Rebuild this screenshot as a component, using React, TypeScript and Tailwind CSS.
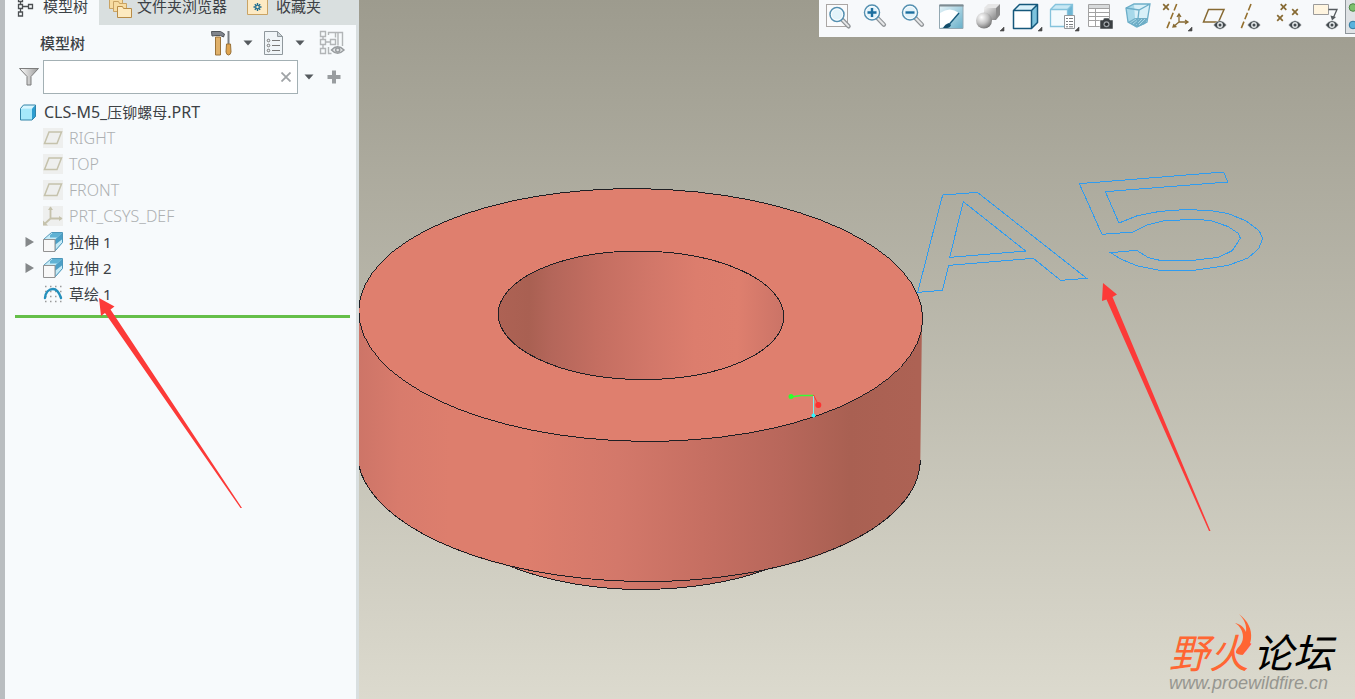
import React from "react";

type IconProps = { children: React.ReactNode; label: string; menu?: boolean };

function ToolButton({ children, label, menu }: IconProps) {
  return (
    <button type="button" aria-label={label} title={label} className="flex min-w-0 flex-1 justify-center">
      <svg width="36" height="36" viewBox="0 0 36 36" fill="none" className="shrink-0 overflow-visible">
        {children}
        {menu && <path d="M34 27v4h-4z" fill="#4a4a4a" stroke="#4a4a4a" strokeWidth=".6" />}
      </svg>
    </button>
  );
}

function Eye({ x, y = 25 }: { x: number; y?: number }) {
  return (
    <g>
      <path
        d={`M${x - 6.5} ${y}q6.5 -8.5 13 0q-6.5 8.5 -13 0z`}
        fill="#434a4e"
        stroke="#f7f9fb"
        strokeWidth=".5"
      />
      <circle cx={x} cy={y} r="2.9" fill="#e4e8ea" />
      <circle cx={x} cy={y} r="1.5" fill="#434a4e" />
    </g>
  );
}

function Cross({ x, y }: { x: number; y: number }) {
  return (
    <path
      d={`M${x - 2.8} ${y - 2.8}l5.6 5.6m0 -5.6l-5.6 5.6`}
      stroke="#876a33"
      strokeWidth="1.7"
    />
  );
}

function Lens({ cx, cy, r }: { cx: number; cy: number; r: number }) {
  return (
    <g>
      <path d={`M${cx + r * 0.72} ${cy + r * 0.72}l6.5 6.8`} stroke="#8f9396" strokeWidth="4.4" strokeLinecap="round" />
      <path d={`M${cx + r * 0.8} ${cy + r * 0.8}l5.8 6`} stroke="#e6e7e8" strokeWidth="2" strokeLinecap="round" />
      <circle cx={cx} cy={cy} r={r} fill="#e3f3fa" stroke="#5590b0" strokeWidth="1.5" />
      <circle cx={cx} cy={cy} r={r - 1.4} stroke="#fff" strokeWidth=".8" />
    </g>
  );
}

function ViewToolbar() {
  return (
    <div
      role="toolbar"
      aria-label="视图"
      className="relative z-10 flex h-[37px] w-[536px] self-end bg-[#f7f9fb]"
    >
      <ToolButton label="重新调整">
        <rect x="6.5" y="4.5" width="21" height="22" fill="#fafbfc" stroke="#aaa6a4" />
        <Lens cx={17} cy={14.5} r={7} />
      </ToolButton>
      <ToolButton label="放大">
        <Lens cx={15} cy={12.5} r={7.5} />
        <path d="M10.5 12.5h9M15 8v9" stroke="#1d6f9f" strokeWidth="2.4" />
      </ToolButton>
      <ToolButton label="缩小">
        <Lens cx={15} cy={12.5} r={7.5} />
        <path d="M10.5 12.5h9" stroke="#1d6f9f" strokeWidth="2.4" />
      </ToolButton>
      <ToolButton label="重画">
        <defs>
          <linearGradient id="repaint" x1="0" y1="0" x2="1" y2="1">
            <stop offset="0" stopColor="#e9f5f9" />
            <stop offset="1" stopColor="#66afc9" />
          </linearGradient>
        </defs>
        <rect x="6.5" y="5" width="23.5" height="23.5" fill="url(#repaint)" />
        <path d="M7 13Q17 6 26 13L15 26L7 28z" fill="#fff" />
        <path d="M6.5 28.5V5h23.5v23.5z" stroke="#93a8b2" />
        <path d="M6.5 5.5h24" stroke="#7e8b91" strokeWidth="2" />
        <path d="M26 13L16.5 24" stroke="#17597a" strokeWidth="1.4" />
        <path d="M10 28q2 -4 6 -5l2 2q-1 3 -4 3z" fill="#134d6a" />
      </ToolButton>
      <ToolButton label="渲染选项" menu>
        <defs>
          <radialGradient id="ball" cx=".35" cy=".3" r=".8">
            <stop offset="0" stopColor="#fff" />
            <stop offset=".5" stopColor="#c3c3c3" />
            <stop offset="1" stopColor="#666" />
          </radialGradient>
          <linearGradient id="block" x1="0" y1="0" x2="1" y2="1">
            <stop offset="0" stopColor="#f1f1f1" />
            <stop offset="1" stopColor="#858585" />
          </linearGradient>
        </defs>
        <path d="M14 8l4-4h12l-4 4z" fill="#e6e6e6" />
        <path d="M14 8h12v12H14z" fill="url(#block)" />
        <path d="M26 8l4-4v11l-4 5z" fill="#8b8b8b" />
        <circle cx="14" cy="20.5" r="8" fill="url(#ball)" />
      </ToolButton>
      <ToolButton label="显示样式" menu>
        <path d="M5.5 10.5l6-6h18l-6 6z" fill="#d9f1fa" />
        <path d="M23.5 10.5l6-6v18l-6 6z" fill="#7cc3dd" />
        <path d="M5.5 10.5h18v18h-18z" fill="#fff" />
        <path
          d="M5.5 10.5l6-6h18v18l-6 6h-18zM5.5 10.5h18v18M23.5 10.5l6-6"
          stroke="#15587b"
          strokeWidth="1.5"
          strokeLinejoin="round"
        />
      </ToolButton>
      <ToolButton label="已保存方向" menu>
        <path d="M5.5 9.5l5-5h17l-5 5z" fill="#c8e8f4" />
        <path d="M22.5 9.5l5-5v16l-5 6z" fill="#6db5d3" />
        <path d="M5.5 9.5h17v17h-17z" fill="#f3fafd" />
        <path d="M5.5 9.5l5-5h17v17l-5 5h-17zM5.5 9.5h17v17M22.5 9.5l5-5" stroke="#85c3dc" strokeWidth="1.3" />
        <path d="M19.5 15.5h10v13h-10z" fill="#fff" stroke="#929699" />
        <path d="M21 18.5h2m1 0h4M21 21.5h2m1 0h4M21 24.5h2m1 0h4M21 26.8h2m1 0h4" stroke="#7a7e81" />
      </ToolButton>
      <ToolButton label="视图管理器">
        <path d="M5.5 4.5h21v22h-21z" fill="#fff" stroke="#a2a2a2" />
        <path d="M6 5h20v3H6z" fill="#d8dadb" />
        <path d="M5.5 8.5h21M5.5 12.5h21M5.5 16.5h21M5.5 20.5h21M12.5 8.5v18" stroke="#a2a2a2" />
        <path d="M17 20h3l1-2h5l1 2h3v9H17z" fill="#3b4043" stroke="#f7f9fb" strokeWidth=".5" />
        <circle cx="23.5" cy="24.3" r="3" fill="#9da3a7" />
        <circle cx="23.5" cy="24.3" r="1.7" fill="#292d30" />
      </ToolButton>
      <ToolButton label="透视图">
        <path d="M6 8l8-4h16l-4 19l-10 4.5L8 22z" fill="#a7d9ea" />
        <path d="M14 4h16l-2 14H15z" fill="#d8f0f8" />
        <path d="M8 22l7-4h13l-3 6-8 3z" fill="#70aec6" />
        <path d="M10 23l6-4m-3 5l6-5m-3 6l6-6m-3 6l6-6" stroke="#aad9e8" />
        <path d="M6 8l8-4h16l-3 18-10 5-9-5zM6 8l13 2 11-6M19 10l-2 17" stroke="#6caec8" strokeWidth="1.3" />
      </ToolButton>
      <ToolButton label="基准显示过滤器" menu>
        <Cross x={8} y={7} />
        <path d="M18.7 4L8.7 29" stroke="#94702f" strokeWidth="1.6" strokeDasharray="7 2.5" />
        <path d="M21 22v-8m-2 3l2-3 2 3M21 22h9m-3-2l3 2-3 2M21 22l-6 5m1-3l-1 3 3.5-.5" stroke="#876a33" strokeWidth="1.3" />
      </ToolButton>
      <ToolButton label="平面显示">
        <path d="M12.5 9.5H28L22.5 22h-15z" stroke="#876a33" strokeWidth="1.5" />
        <Eye x={24} />
      </ToolButton>
      <ToolButton label="轴显示">
        <path d="M18 4L8 29" stroke="#94702f" strokeWidth="1.6" strokeDasharray="7 2.5" />
        <Eye x={21} />
      </ToolButton>
      <ToolButton label="点显示">
        <Cross x={12.5} y={7} />
        <Cross x={24} y={12} />
        <Cross x={9} y={18} />
        <Eye x={24} />
      </ToolButton>
      <ToolButton label="注释显示">
        <path d="M5.5 4.5h15v10h-15z" fill="#fff5e0" stroke="#9b9b9b" />
        <path d="M20.5 9.5h8.5l-4 9" stroke="#555b5f" strokeWidth="1.3" />
        <path d="M22.5 15.5l1.5 5 4-3.5z" fill="#555b5f" />
        <Eye x={24} y={25} />
      </ToolButton>
      <button
        type="button"
        aria-label="旋转中心"
        className="h-[34px] w-[10px] shrink-0 overflow-hidden border-b border-l border-[#8f969b] bg-[#dfe2e5]"
      >
        <svg width="9" height="33" viewBox="0 0 9 33">
          <circle cx="7" cy="7.5" r="3.8" fill="#7cbf6c" stroke="#4d8646" />
          <circle cx="7" cy="25" r="3.8" fill="#58b2dc" stroke="#3179a0" />
        </svg>
      </button>
    </div>
  );
}

function Caret({ label }: { label: string }) {
  return (
    <button type="button" aria-label={label} className="flex h-6 w-[10px] items-center justify-center">
      <svg width="10" height="6" viewBox="0 0 10 6">
        <path d="M.5 .5h9L5 5.5z" fill="#555a5e" />
      </svg>
    </button>
  );
}

function PlaneIcon() {
  return (
    <svg width="20" height="20" viewBox="0 0 20 20" fill="none">
      <path d="M0 0h20v20H0z" fill="#eeefee" />
      <path d="M6 4h12.5l-4.500 11.5H1.500z" stroke="#c5c2ac" strokeWidth="1.5" />
    </svg>
  );
}

function CsysIcon() {
  return (
    <svg width="20" height="20" viewBox="0 0 20 20" fill="none">
      <path d="M0 0h20v20H0z" fill="#eeefee" />
      <path d="M7.500 12.500V1.500M7.500 12.500H18.500M7.500 12.500L1.500 18" stroke="#c5c2ac" strokeWidth="1.8" />
      <path d="M5 4l2.500-3.500L10 4zM16 10l3.500 2.500L16 15zM0 14.500v5h5z" fill="#c5c2ac" />
    </svg>
  );
}

function ExtrudeIcon() {
  return (
    <svg width="20" height="20" viewBox="0 0 20 20" fill="none">
      <path d="M1 7.500L9 1H19.500L12 7.500z" fill="#c5ecf8" />
      <path d="M7 3L9.500 1H19L14 5.500H7z" fill="#5fb2d4" />
      <path d="M12 7.500l7.500-7v10L12 19z" fill="#4b9fc6" />
      <path d="M12.500 18V12.500L19.500 7v4z" fill="#c5eaf6" />
      <path d="M.5 7.500L8.500 .5h11v10L12 19" stroke="#4c97ba" />
      <path d="M.5 7.500h11.500v12H.5z" fill="#f8f8f8" stroke="#929292" />
    </svg>
  );
}

function SketchIcon() {
  return (
    <svg width="20" height="20" viewBox="0 0 20 20" fill="none">
      <path
        d="M2 2.500h17M2 7.500h17M2 12.500h17M2 17.500h17"
        stroke="#9a9a9a"
        strokeWidth="1.5"
        strokeDasharray="1.5 3.5"
      />
      <path d="M2 14C2.500 8 6 5 10 5S16 8 18 14" stroke="#2490bd" strokeWidth="2.4" strokeLinecap="round" />
    </svg>
  );
}

type Node = { name: string; icon: React.ReactNode; dim?: boolean; expandable?: boolean };

const nodes: Node[] = [
  { name: "RIGHT", icon: <PlaneIcon />, dim: true },
  { name: "TOP", icon: <PlaneIcon />, dim: true },
  { name: "FRONT", icon: <PlaneIcon />, dim: true },
  { name: "PRT_CSYS_DEF", icon: <CsysIcon />, dim: true },
  { name: "拉伸 1", icon: <ExtrudeIcon />, expandable: true },
  { name: "拉伸 2", icon: <ExtrudeIcon />, expandable: true },
  { name: "草绘 1", icon: <SketchIcon /> },
];

function Sidebar() {
  return (
    <aside className="w-[359px] shrink-0 border-r-[3px] border-l-[5px] border-r-[#d9dfe0] border-l-[#b9bdc0] bg-[#f7fafc]">
      <div role="tablist" className="flex h-[25px] items-end overflow-hidden bg-[#d9dfdf]">
        <button
          type="button"
          role="tab"
          aria-selected="true"
          className="flex h-[38px] w-[94px] items-center gap-2 bg-[#f7fafc] pl-3"
        >
          <svg width="18" height="22" viewBox="0 0 18 22" fill="none" className="shrink-0">
            <path d="M1.500 2.500h4v4h-4zM1.500 9.500h4v4h-4zM11.500 9.500h4v4h-4zM1.500 17h4v4h-4zM3.500 6.500v3M3.500 13.500V17M5.500 11.500h6" stroke="#4b4f52" strokeWidth="1.3" />
          </svg>
          模型树
        </button>
        <button type="button" role="tab" aria-selected="false" className="flex h-[38px] items-center gap-1 pl-2.5">
          <svg width="24" height="24" viewBox="0 0 24 24" fill="none" className="shrink-0">
            <g fill="#f7dca2" stroke="#c9a364">
              <path d="M.5 3.500h5l1 2h7v9H.5z" />
              <path d="M4.500 7.500h5l1 2h7v8h-13z" />
              <path d="M8.500 12.500h5l1 2h8v9h-14z" fill="#fdeac0" stroke="#b88c47" />
            </g>
          </svg>
          文件夹浏览器
        </button>
        <button type="button" role="tab" aria-selected="false" className="flex h-[38px] items-center gap-2 pl-5">
          <svg width="21" height="18" viewBox="0 0 21 18" fill="none" className="shrink-0">
            <path d="M.5 2.500h6l1-2h7l1 2h5v15H.5z" fill="#fdeac4" stroke="#c9a364" />
            <path d="M10.500 6v8M6.500 10h8M7.800 7.300l5.400 5.400M13.200 7.300l-5.400 5.400" stroke="#1c6b8f" strokeWidth="1.4" />
            <circle cx="10.500" cy="10" r="1.200" fill="#fdeac4" />
          </svg>
          收藏夹
        </button>
      </div>

      <div className="flex h-[35px] items-center pr-[11px] pl-[35px]">
        <h1 className="flex-1 text-[15px] font-medium">模型树</h1>
        <button type="button" aria-label="设置" className="mr-2.5">
          <svg width="22" height="26" viewBox="0 0 22 26" fill="none">
            <path d="M4.500 7h5v18h-5z" fill="#dfb06a" stroke="#9a7238" />
            <path d="M.5 1.500h9l4 2.500-1 3-3-1.500H5L1 6z" fill="#80858d" stroke="#50555b" />
            <path d="M17.500 1v13" stroke="#797e83" strokeWidth="2" />
            <path d="M15.500 14h4l.5 8q-.5 3-2.500 3t-2.500-3z" fill="#dfa44f" stroke="#9a7238" />
          </svg>
        </button>
        <Caret label="设置选项" />
        <button type="button" aria-label="显示" className="mx-[11px]">
          <svg width="20" height="26" viewBox="0 0 20 26" fill="none">
            <path d="M.5 1.500h13l5 5v18h-18z" fill="#f0f5f8" stroke="#90989d" />
            <path d="M13.500 1.500v5h5z" fill="#cbd3d7" stroke="#90989d" />
            <path d="M8 10.500h8M8 15.500h8M8 20.500h8" stroke="#777" />
            <g stroke="#777">
              <circle cx="4.500" cy="10.500" r="1.300" />
              <circle cx="4.500" cy="15.500" r="1.300" />
              <circle cx="4.500" cy="20.500" r="1.300" />
            </g>
          </svg>
        </button>
        <Caret label="显示选项" />
        <button type="button" aria-label="树列" className="ml-3.5">
          <svg width="26" height="25" viewBox="0 0 26 25" fill="none">
            <path d="M1.500 1.500h5v5h-5zM1.500 9.500h5v5h-5zM1.500 18.500h5v5h-5zM11.500 9.500h5v5h-5zM4 6.500v3M4 14.500v4M6.500 12h5M9.500 5V2.500h7v5M16.500 2.500h7V16M9.500 17v6.500h3M19 2.500v13" stroke="#b2b5b7" strokeWidth="1.4" />
            <path d="M12.500 20q6-6.500 12.500 0q-6.500 6.500-12.500 0z" fill="#e4e6e7" stroke="#989c9f" strokeWidth="1.5" />
            <circle cx="18.700" cy="20" r="2" stroke="#989c9f" strokeWidth="1.5" />
          </svg>
        </button>
      </div>

      <div className="flex h-[34px] items-center pr-[15px] pl-[13px]">
        <svg width="22" height="20" viewBox="0 0 22 20" fill="none" className="mr-[3px] shrink-0">
          <defs>
            <linearGradient id="funnel">
              <stop offset="0" stopColor="#fff" />
              <stop offset="1" stopColor="#999" />
            </linearGradient>
          </defs>
          <path d="M1.500 1.500h19L13 9.500V18H9V9.500z" fill="url(#funnel)" stroke="#7d7d7d" />
        </svg>
        <div className="flex h-[34px] min-w-0 flex-1 items-center border border-[#a3b0b4] bg-white">
          <input type="text" aria-label="过滤模型树" className="h-8 min-w-0 flex-1 px-2 outline-none" />
          <button type="button" aria-label="清除" className="mr-1.5">
            <svg width="10" height="10" viewBox="0 0 10 10">
              <path d="M.5 .5l9 9M9.500 .5l-9 9" stroke="#9fa3a6" strokeWidth="1.8" />
            </svg>
          </button>
        </div>
        <div className="mx-1.5 flex">
          <Caret label="过滤选项" />
        </div>
        <button type="button" aria-label="添加" className="ml-[7px]">
          <svg width="14" height="14" viewBox="0 0 14 14">
            <path d="M7 .5v13M.5 7h13" stroke="#999da0" strokeWidth="4" />
          </svg>
        </button>
      </div>

      <ul role="tree" className="pt-[5px]">
        <li role="treeitem" className="flex h-[26px] items-center gap-[7px] pl-3.5">
          <svg width="18" height="17" viewBox="0 0 18 17" fill="none">
            <path d="M1.500 4.500l3-3.500h12l-3 3.500z" fill="#d8f6ff" />
            <path d="M13 4.500l3.500-3.500v11.500L13 16z" fill="#2d9dd0" />
            <path d="M1.500 4.500H13V16H1.500z" fill="#a5e8fb" />
            <path d="M1.500 4.500l3-3.500h12v11.500L13 16H1.500z" stroke="#3183a8" strokeLinejoin="round" />
          </svg>
          <span className="text-[16px]">
            CLS-M5_<span className="text-[15px]">压铆螺母</span>.PRT
          </span>
        </li>
        {nodes.map((n) => (
          <li key={n.name} role="treeitem" className="flex h-[26px] items-center pl-5">
            <span className="flex w-[18px] shrink-0">
              {n.expandable && (
                <button type="button" aria-label={`展开 ${n.name}`}>
                  <svg width="9" height="10" viewBox="0 0 9 10">
                    <path d="M.5 0L9 5L.5 10z" fill="#85888a" />
                  </svg>
                </button>
              )}
            </span>
            {n.icon}
            <span className={n.dim ? "ml-1.5 text-[16px] font-light text-[#adb0b2]" : "ml-1.5"}>{n.name}</span>
          </li>
        ))}
      </ul>
      <div className="mt-2 mr-1.5 ml-2.5 h-[3px] bg-[#65bf49]" />
    </aside>
  );
}

function ModelView() {
  return (
    <svg
      role="img"
      aria-label="压铆螺母模型"
      width="996"
      height="699"
      viewBox="359 0 996 699"
      fill="none"
      className="absolute top-0 left-0"
    >
      <defs>
        <linearGradient id="wall" gradientUnits="userSpaceOnUse" x1="359" x2="922" y1="0" y2="6">
          <stop offset="0" stopColor="#cc7467" />
          <stop offset=".08" stopColor="#d87b6c" />
          <stop offset=".17" stopColor="#dd7e6d" />
          <stop offset=".31" stopColor="#dd7e6d" />
          <stop offset=".47" stopColor="#d3786a" />
          <stop offset=".62" stopColor="#c66f62" />
          <stop offset=".76" stopColor="#b8675b" />
          <stop offset=".88" stopColor="#a96052" />
          <stop offset="1" stopColor="#ad6254" />
        </linearGradient>
        <linearGradient id="bore" gradientUnits="userSpaceOnUse" x1="498" x2="784" y1="0" y2="3">
          <stop offset="0" stopColor="#ae6254" />
          <stop offset=".12" stopColor="#a96052" />
          <stop offset=".2" stopColor="#b4665a" />
          <stop offset=".36" stopColor="#c46e61" />
          <stop offset=".55" stopColor="#d27769" />
          <stop offset=".7" stopColor="#dc7d6d" />
          <stop offset=".85" stopColor="#de7f6e" />
          <stop offset="1" stopColor="#cc7467" />
        </linearGradient>
      </defs>
      <path
        d="M512 567C550 582 598 589.500 640 589.500C688 589.500 733 582 765 570L640 560z"
        fill="url(#wall)"
        stroke="#1f1f24"
        shapeRendering="crispEdges"
      />
      <path
        d="M358 312L357.300 453A281.500 125.500 .9 0 0 920.300 460L922 319z"
        fill="url(#wall)"
      />
      <path
        d="M357.300 451.500A281.500 125.500 .9 0 0 920.300 460.500"
        stroke="#1f1f24"
        shapeRendering="crispEdges"
      />
      <g stroke="#1f1f24" shapeRendering="crispEdges">
        <ellipse cx="640.700" cy="315" rx="282" ry="126.300" transform="rotate(.9 640.700 315)" fill="#df7f6e" />
        <ellipse cx="641" cy="315.300" rx="142.800" ry="64.200" transform="rotate(.6 641 315.300)" fill="url(#bore)" />
      </g>

      <svg x="900" y="150" width="380" height="160" viewBox="0 0 1140 480">
        <g stroke="#2f9cf0" strokeWidth="3" shapeRendering="crispEdges">
          <polygon points="128,135 232,127 560,385 482,391 400,325 146,346 127,421 53,427" />
          <polygon points="190,155 377,303 149,322" />
          <polygon points="538,101 971,66 983,96 616,125 657,219 712,197 780,184 853,179 928,181 985,191 1037,212 1078,243 1088,265 1076,296 1044,324 985,346 880,361 778,361 710,347 660,326 632,308 710,301 745,323 780,331 880,331 955,322 997,302 1021,265 1015,250 985,230 930,211 875,208 790,213 740,225 700,246 606,253" />
        </g>
      </svg>

      <path d="M813.500 395.500L801 395.500L791 397" stroke="#35ff35" strokeWidth="1.4" />
      <path d="M813.500 395l4.500 9" stroke="#ff3030" />
      <path d="M813.500 396v19" stroke="#7ff0f0" />
      <circle cx="791" cy="396.500" r="2.500" fill="#2dff2d" />
      <circle cx="818.300" cy="405" r="3" fill="#ff3030" />
      <circle cx="813.500" cy="415.500" r="2" fill="#2ff5ff" />
    </svg>
  );
}

function Watermark() {
  return (
    <div className="absolute right-[22px] bottom-1.5 flex flex-col items-start">
      <div className="relative flex gap-1 text-[40px] leading-10 italic">
        <span className="text-[#ff6633]">野火</span>
        <span className="text-black">论坛</span>
        <svg width="18" height="42" viewBox="0 0 18 42" className="absolute -top-[19px] left-[66px]">
          <path
            d="M4 0C13 7 17 15 16 25C15 33 10 36 8 40Q5 42 1 39C0 34 8 32 8 23C8 17 5 12 0 9C5 10 9 13 11 18C12 11 9 5 4 0z"
            fill="#ff6633"
          />
        </svg>
      </div>
      <span className="font-['Liberation_Sans',sans-serif] text-[18px] leading-5 text-[#969690] italic">
        www.proewildfire.cn
      </span>
    </div>
  );
}

function Pointers() {
  return (
    <svg
      width="1355"
      height="699"
      viewBox="0 0 1355 699"
      className="pointer-events-none absolute top-0 left-0 z-20"
      aria-hidden="true"
      fill="#fc3a38"
    >
      <path d="M99 298L114.500 306.500L110.500 309.500L242 508L240.500 508L105 313L101 316z" />
      <path d="M1103 283L1117 294.500L1112.500 297L1210.500 531L1209 531L1106.500 299.500L1102 301z" />
    </svg>
  );
}

export default function App() {
  return (
    <div className="relative flex min-h-screen overflow-hidden font-['Noto_Sans','Noto_Sans_CJK_SC',sans-serif] text-[15px] leading-5 whitespace-nowrap text-[#3c4145]">
      <Sidebar />
      <main className="relative flex min-w-0 flex-1 flex-col overflow-hidden bg-linear-to-b from-[#9d9b8e] to-[#dcdace]">
        <ModelView />
        <ViewToolbar />
        <Watermark />
      </main>
      <Pointers />
    </div>
  );
}
